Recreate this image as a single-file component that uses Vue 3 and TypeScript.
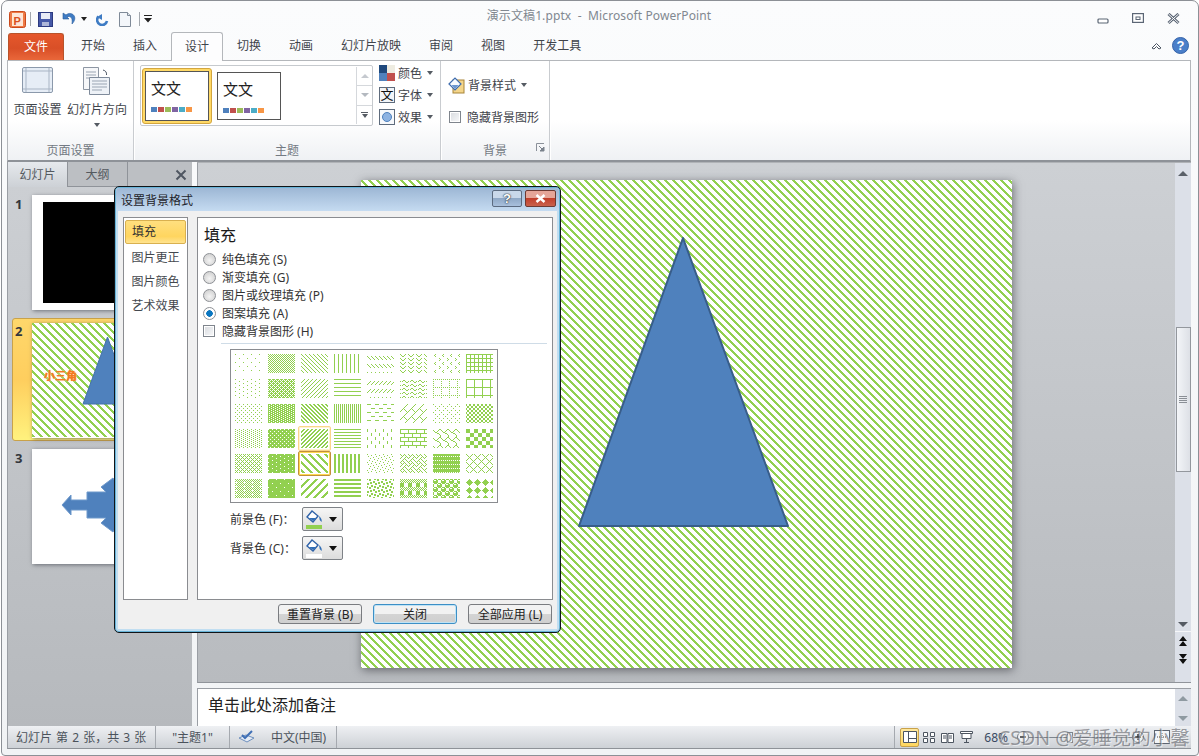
<script setup lang="ts">
const tabs = ['开始', '插入', '设计', '切换', '动画', '幻灯片放映', '审阅', '视图', '开发工具']
const sideItems = ['填充', '图片更正', '图片颜色', '艺术效果']
const fillOptions = [
  { label: '纯色填充 (S)', on: false },
  { label: '渐变填充 (G)', on: false },
  { label: '图片或纹理填充 (P)', on: false },
  { label: '图案填充 (A)', on: true },
]
const themeBars = ['#4f81bd', '#c0504d', '#9bbb59', '#8064a2', '#4bacc6', '#f79646']

// 8px wide hatch bitmaps, one hex byte per row, left to right as in the palette
const hatches = [
  '80 00 00 00 08 00 00 00', 'AA 55', '88 44 22 11', '88', '00 00 88 44 22 11 00 00', '84 48 30 00', '20 40 20 00 02 01 02 00', 'FF 88 88 88',
  '80 00 08 00', 'EE 55 BB 55', '11 22 44 88', 'FF 00 00 00', '00 00 11 22 44 88 00 00', '00 18 A4 03', 'AA 00 80 00 80 00 80 00', 'FF 80 80 80 80 80 80 80',
  '88 00 22 00', 'EE BB', 'CC 66 33 99', 'AA', 'F0 00 00 00 0F 00 00 00', '01 02 04 08 10 28 44 82', '80 00 22 00 08 00 22 00', '99 99 66 66',
  '88 22', '77 FF DD FF', '33 66 CC 99', 'FF 00 00', '80 80 80 00 08 08 08 00', 'FF 80 80 80 FF 08 08 08', '03 84 48 30 0C 02 01 01', 'F0 F0 F0 F0 0F 0F 0F 0F',
  'AA 44 AA 11', '7F FF F7 FF', 'C1 E0 70 38 1C 0E 07 83', 'CC', '80 08 40 02 10 01 20 04', '88 54 22 45 88 14 22 51', 'FF FF 55 FF', '82 44 28 10 28 44 82 01',
  'AA 55 AA 15', '7F FF FF FF F7 FF FF FF', '83 07 0E 1C 38 70 E0 C1', 'FF FF 00 00', 'B1 30 03 1B D8 C0 0C 8D', 'AA 55 AA 55 F0 F0 F0 F0', '77 98 F8 F8 77 89 8F 8F', '10 38 7C FE 7C 38 10 00',
]

function bitmap(code: string) {
  const rows = code.split(' ').map((h) => parseInt(h, 16))
  const rects: { x: number; y: number }[] = []
  rows.forEach((row, y) => {
    for (let x = 0; x < 8; x++) {
      if (row & (0x80 >> x)) rects.push({ x, y })
    }
  })
  return { rects, h: rows.length }
}

const cells = hatches.map((code, i) => ({ id: `hatch${i}`, ...bitmap(code) }))
const stripes = bitmap('C1 E0 70 38 1C 0E 07 83').rects
</script>

<template>
  <div class="window">
    <header class="titlebar">
      <div class="qat">
        <svg class="q-logo" width="17" height="17" viewBox="0 0 17 17">
          <rect x="0.5" y="0.5" width="16" height="16" rx="2" fill="#ef7a45" stroke="#c9491c" />
          <rect x="3" y="2" width="11" height="13" fill="#fde6d6" />
          <text x="4.5" y="13.5" class="q-p">P</text>
        </svg>
        <i class="q-sep q-sep1"></i>
        <svg class="q-save" width="15" height="15" viewBox="0 0 15 15">
          <rect x="0.5" y="0.5" width="14" height="14" fill="#4659a8" stroke="#2c3a80" />
          <rect x="3" y="1" width="9" height="6" fill="#e8ecf6" />
          <rect x="4" y="10" width="7" height="4" fill="#aeb6d8" />
        </svg>
        <svg class="q-undo" width="14" height="14" viewBox="0 0 14 14">
          <path d="M1 1v6h6L5 5c3-1.500 6 0 5 7 3-3 4-7 1-9.500C9 1 6 1 4 3z" fill="#3f7cc4" stroke="#275a9c" stroke-width="0.6" />
        </svg>
        <i class="tri q-arrow"></i>
        <svg class="q-redo" width="13" height="13" viewBox="0 0 13 13">
          <path d="M2.500 3.500A5 5 0 1 0 11 8" fill="none" stroke="#3f7cc4" stroke-width="2.600" />
          <path d="M7 0v6l-5-3z" transform="translate(-1 1)" fill="#3f7cc4" />
        </svg>
        <svg class="q-new" width="12" height="15" viewBox="0 0 12 15">
          <path d="M.5.500h8l3 3v11H.5z" fill="#f3f6fa" stroke="#7f8a98" />
          <path d="M8.500.500v3h3" fill="#dfe5ec" stroke="#7f8a98" />
        </svg>
        <i class="q-sep q-sep2"></i>
        <svg class="q-more" width="8" height="8" viewBox="0 0 8 8">
          <path d="M0 0h8v1H0zM0 3h8L4 7.500z" fill="#222" />
        </svg>
      </div>
      <div class="doc-title">演示文稿1.pptx&nbsp; - &nbsp;Microsoft PowerPoint</div>
      <div class="win-btns">
        <svg width="13" height="7" viewBox="0 0 13 7" class="w-min"><rect x="1" y="1" width="10" height="4" rx="1" fill="#fff" stroke="#5b6675" stroke-width="1.200" /></svg>
        <svg width="13" height="12" viewBox="0 0 13 12" class="w-max"><rect x=".6" y=".6" width="10.800" height="8.800" fill="#fff" stroke="#5b6675" stroke-width="1.200" /><rect x="4" y="4" width="4" height="2.500" fill="none" stroke="#5b6675" /></svg>
        <svg width="13" height="12" viewBox="0 0 13 12" class="w-close"><path d="M1.500 1l10 9M11.500 1l-10 9" stroke="#5b6675" stroke-width="3" /><path d="M1.500 1l10 9M11.500 1l-10 9" stroke="#fff" stroke-width="1" /></svg>
      </div>
    </header>

    <nav class="tabbar">
      <span class="file-tab">文件</span>
      <span v-for="t in tabs" :key="t" class="tab" :class="{ active: t === '设计' }">{{ t }}</span>
      <span class="tab-tools">
        <svg width="11" height="8" viewBox="0 0 11 8"><path d="M1 6l4.500-4.500L10 6 8 7 5.500 4.500 3 7z" fill="#fff" stroke="#4b5563" /></svg>
        <svg width="17" height="17" viewBox="0 0 17 17" class="help">
          <circle cx="8.500" cy="8.500" r="8" fill="#4a7fc9" stroke="#3563a8" />
          <text x="8.500" y="13" text-anchor="middle" class="help-q">?</text>
        </svg>
      </span>
    </nav>

    <section class="ribbon">
      <div class="group page-group">
        <div class="group-body">
          <div class="big-btn first">
            <svg class="icon-page" width="31" height="26" viewBox="0 0 31 26">
              <rect x=".5" y=".5" width="30" height="25" rx="1.500" fill="#e6edf6" stroke="#8b99ab" />
              <path d="M4 1v24M27 1v24M1 4h29M1 22h29" stroke="#a9b5c5" fill="none" />
            </svg>
            <span>页面设置</span>
          </div>
          <div class="big-btn">
            <svg class="icon-orient" width="28" height="29" viewBox="0 0 28 29">
              <path d="M.5.500h15v22H.5z" fill="#f6f7f9" stroke="#8d96a3" />
              <path d="M3 5h10M3 8h10M3 11h10" stroke="#9aa5b3" />
              <path d="M6.500 10.500h20v17h-20z" fill="#eef2f7" stroke="#7f8b9b" />
              <path d="M9 14h15M9 17h15M9 20h15M9 23h10" stroke="#9aa5b3" />
              <path d="M20 3q4 1 3.500 5" fill="none" stroke="#4b5563" />
            </svg>
            <span>幻灯片方向</span>
            <i class="tri big-arrow"></i>
          </div>
        </div>
        <div class="group-label">页面设置</div>
      </div>

      <div class="group theme-group">
        <div class="group-body theme-body">
          <div class="gallery">
            <div class="theme-list">
              <div class="theme-pick">
                <div class="theme-card">
                  <span class="theme-word">文文</span>
                  <span class="theme-bars"><i v-for="c in themeBars" :key="c" :style="{ background: c }"></i></span>
                </div>
              </div>
              <div class="theme-card plain">
                <span class="theme-word">文文</span>
                <span class="theme-bars"><i v-for="c in themeBars" :key="c" :style="{ background: c }"></i></span>
              </div>
            </div>
            <div class="gallery-scroll">
              <span><i class="tri-up pale"></i></span>
              <span><i class="tri pale"></i></span>
              <span class="g-more"><i class="g-more-line"></i><i class="tri"></i></span>
            </div>
          </div>
          <div class="theme-opts">
            <div class="opt">
              <svg width="16" height="16" viewBox="0 0 16 16">
                <rect width="8" height="8" fill="#1f497d" /><rect x="8" width="8" height="8" fill="#eeece1" />
                <rect y="8" width="8" height="8" fill="#4f81bd" /><rect x="8" y="8" width="8" height="8" fill="#c0504d" />
              </svg>
              <span>颜色</span><i class="tri"></i>
            </div>
            <div class="opt">
              <span class="font-ico">文</span>
              <span>字体</span><i class="tri"></i>
            </div>
            <div class="opt">
              <svg width="16" height="16" viewBox="0 0 16 16">
                <rect x=".5" y=".5" width="15" height="15" fill="#f7f9fc" stroke="#5e6b7c" />
                <circle cx="8" cy="8" r="4.500" fill="#8db3e2" stroke="#4f81bd" />
              </svg>
              <span>效果</span><i class="tri"></i>
            </div>
          </div>
        </div>
        <div class="group-label">主题</div>
      </div>

      <div class="group bg-group">
        <div class="group-body bg-body">
          <div class="opt bg-style">
            <svg width="17" height="17" viewBox="0 0 17 17">
              <rect x="5" y="3" width="11" height="13" fill="#f4d58a" stroke="#a78438" />
              <path d="M1 7l6-6 6 6-6 6z" fill="#f8fbff" stroke="#3e6cae" stroke-width="1.200" />
              <path d="M3.500 8h7L7 12z" fill="#6b97d1" />
            </svg>
            <span>背景样式</span><i class="tri"></i>
          </div>
          <div class="opt bg-check">
            <i class="check"></i>
            <span>隐藏背景图形</span>
          </div>
        </div>
        <div class="group-label">背景
          <svg class="launcher" width="9" height="9" viewBox="0 0 9 9">
            <path d="M.5 8V.500H8" fill="none" stroke="#8a9099" />
            <path d="M3 3l4 4M8 4v4H4z" stroke="#7a828c" fill="#7a828c" />
          </svg>
        </div>
      </div>
    </section>

    <main class="workspace">
      <aside class="slides-panel">
        <div class="panel-tabs">
          <span class="p-tab on">幻灯片</span>
          <span class="p-tab">大纲</span>
          <svg class="p-close" width="12" height="12" viewBox="0 0 12 12"><path d="M1.500 1.500l9 9M10.500 1.500l-9 9" stroke="#4f5661" stroke-width="2" /></svg>
        </div>
        <div class="slide-list">
          <div class="slide-row">
            <b class="num">1</b>
            <div class="thumb thumb-black"><div class="black-box"></div></div>
          </div>
          <div class="slide-row current">
            <b class="num">2</b>
            <div class="thumb">
              <svg width="153" height="114" viewBox="0 0 153 114">
                <rect width="153" height="114" fill="url(#wideStripes)" />
                <polygon points="75.500,14 51,81 100,81" fill="#4f81bd" stroke="#4372aa" />
              </svg>
              <span class="mini-title">小三角</span>
            </div>
          </div>
          <div class="slide-row">
            <b class="num">3</b>
            <div class="thumb">
              <svg width="153" height="115" viewBox="0 0 153 115">
                <polygon points="30,56 39,46 39,51 55,51 55,43 74,43 69,38 81,29 98,56 81,83 69,74 74,69 55,69 55,61 39,61 39,66" fill="#4f81bd" stroke="#6f99cb" />
              </svg>
            </div>
          </div>
        </div>
      </aside>

      <div class="main-pane">
        <div class="editor">
          <div class="stage">
            <div class="slide">
              <svg width="651" height="488" viewBox="0 0 651 488">
                <defs>
                  <pattern id="wideStripes" patternUnits="userSpaceOnUse" width="8" height="8">
                    <rect width="8" height="8" fill="#fff" />
                    <rect v-for="(r, i) in stripes" :key="i" :x="r.x" :y="r.y" width="1" height="1" fill="#92d050" />
                  </pattern>
                </defs>
                <rect width="651" height="488" fill="url(#wideStripes)" />
                <polygon points="322,58 218,346 427,346" fill="#4f81bd" stroke="#385d8a" stroke-width="2" stroke-linejoin="round" />
              </svg>
            </div>
          </div>
          <div class="vscroll">
            <i class="tri-up sb-up"></i>
            <div class="sb-thumb"><i></i><i></i><i></i><i></i></div>
            <i class="tri sb-down"></i>
            <div class="sb-nav">
              <svg width="10" height="12" viewBox="0 0 10 12"><path d="M5 0l4 5H1zM5 5l4 5H1z" fill="#111" /></svg>
              <svg width="10" height="12" viewBox="0 0 10 12"><path d="M1 1h8L5 6zM1 6h8l-4 5z" fill="#111" /></svg>
            </div>
          </div>
        </div>
        <div class="notes">
          <span class="notes-text">单击此处添加备注</span>
          <div class="notes-scroll"><i class="tri-up"></i><i class="tri"></i></div>
        </div>
      </div>
    </main>

    <footer class="statusbar">
      <span class="st st-count">幻灯片 第 2 张，共 3 张</span>
      <span class="st st-theme">"主题1"</span>
      <span class="st st-lang">
        <svg width="17" height="14" viewBox="0 0 17 14">
          <path d="M1 8l7-3 8 3-7 4z" fill="#e6ecf5" stroke="#6d8fbd" />
          <path d="M4 5l3 3 7-7" fill="none" stroke="#3f6fb5" stroke-width="2" />
        </svg>
        中文(中国)
      </span>
      <div class="views">
        <span class="view on"><svg width="14" height="12" viewBox="0 0 14 12"><path d="M.5.500h13v11H.5zM5.500.500v11M5.500 7.500h8" fill="#fff" stroke="#4d5560" /></svg></span>
        <span class="view"><svg width="12" height="11" viewBox="0 0 12 11"><path d="M.5.500h4v4h-4zM7.500.500h4v4h-4zM.5 6.500h4v4h-4zM7.500 6.500h4v4h-4z" fill="#fff" stroke="#4d5560" /></svg></span>
        <span class="view"><svg width="13" height="11" viewBox="0 0 13 11"><path d="M.5 1.500h5.500v9H.5zM7 1.500h5.500v9H7zM2 4h3M2 6h3M8 4h3M8 6h3" fill="#fff" stroke="#4d5560" /></svg></span>
        <span class="view"><svg width="13" height="12" viewBox="0 0 13 12"><path d="M.5.500h12v2H.5zM2 2.500h9v5H2zM6.500 7.500V11M4 11.500h5" fill="#fff" stroke="#4d5560" /></svg></span>
      </div>
      <span class="zoom-val">68%</span>
      <div class="zoom-slider">
        <svg width="12" height="12" viewBox="0 0 12 12"><circle cx="6" cy="6" r="5.500" fill="#eef0f3" stroke="#767d87" /><path d="M3 6h6" stroke="#333" stroke-width="1.500" /></svg>
        <span class="zoom-track"><i class="zoom-knob"></i></span>
        <svg width="12" height="12" viewBox="0 0 12 12"><circle cx="6" cy="6" r="5.500" fill="#eef0f3" stroke="#767d87" /><path d="M3 6h6M6 3v6" stroke="#333" stroke-width="1.500" /></svg>
      </div>
      <svg class="fit" width="16" height="14" viewBox="0 0 16 14"><rect x=".5" y=".5" width="15" height="13" fill="#f3f5f8" stroke="#5e6672" /><path d="M3 7h10M8 3v8" stroke="#444" stroke-dasharray="1 1" /></svg>
    </footer>

    <div class="dialog">
      <div class="dlg-title">
        <span>设置背景格式</span>
        <div class="dlg-btns">
          <span class="cap-btn">?</span>
          <span class="cap-btn cap-close">
            <svg width="11" height="9" viewBox="0 0 11 9"><path d="M1.500 1l8 7M9.500 1l-8 7" stroke="#fff" stroke-width="2.500" /></svg>
          </span>
        </div>
      </div>
      <div class="dlg-body">
        <div class="dlg-main">
          <ul class="dlg-side">
            <li v-for="(s, i) in sideItems" :key="s" :class="{ picked: i === 0 }">{{ s }}</li>
          </ul>
          <div class="dlg-pane">
            <h2>填充</h2>
            <label v-for="o in fillOptions" :key="o.label" class="fill-opt">
              <i class="radio" :class="{ on: o.on }"></i>{{ o.label }}
            </label>
            <label class="fill-opt"><i class="check"></i>隐藏背景图形 (H)</label>
            <hr class="pane-rule" />
            <div class="palette">
              <div v-for="(c, i) in cells" :key="c.id" class="cell" :class="{ hover: i === 26, chosen: i === 34 }">
                <svg width="27" height="19" viewBox="0 0 27 19">
                  <defs>
                    <pattern :id="c.id" patternUnits="userSpaceOnUse" width="8" :height="c.h">
                      <rect v-for="(r, k) in c.rects" :key="k" :x="r.x" :y="r.y" width="1" height="1" fill="#92d050" />
                    </pattern>
                  </defs>
                  <rect width="27" height="19" :fill="`url(#${c.id})`" />
                </svg>
              </div>
            </div>
            <div class="color-row">
              <span>前景色 (F)：</span>
              <div class="color-btn">
                <svg width="17" height="19" viewBox="0 0 17 19">
                  <path d="M1 7l5-6 6 5-5 6z" fill="#fff" stroke="#2f62a8" stroke-width="1.400" />
                  <path d="M3 8h7l-3 3zM13 6q3.500 3 2.500 6-2.500-2-2.500-6z" fill="#2f6db5" />
                  <rect y="15" width="16" height="4" fill="#92d050" />
                </svg>
                <i class="tri dark"></i>
              </div>
            </div>
            <div class="color-row">
              <span>背景色 (C)：</span>
              <div class="color-btn">
                <svg width="17" height="19" viewBox="0 0 17 19">
                  <path d="M1 7l5-6 6 5-5 6z" fill="#fff" stroke="#2f62a8" stroke-width="1.400" />
                  <path d="M3 8h7l-3 3zM13 6q3.500 3 2.500 6-2.500-2-2.500-6z" fill="#2f6db5" />
                  <rect y="15" width="16" height="4" fill="#fff" />
                </svg>
                <i class="tri dark"></i>
              </div>
            </div>
          </div>
        </div>
        <div class="dlg-foot">
          <button>重置背景 (B)</button>
          <button class="focus">关闭</button>
          <button>全部应用 (L)</button>
        </div>
      </div>
    </div>

    <div class="watermark">CSDN @爱睡觉的小馨</div>
  </div>
</template>

<style scoped>
.window {
  position: relative;
  box-sizing: border-box;
  width: 1198px;
  height: 756px;
  margin-left: 1px;
  padding: 0 7px 6px 5px;
  display: flex;
  flex-direction: column;
  overflow: hidden;
  border: 1px solid #8c9096;
  border-radius: 7px 7px 4px 4px;
  background: linear-gradient(#fbfcfd, #f1f3f5);
  font-family: "Noto Sans", "Noto Sans CJK SC", sans-serif;
  font-size: 12px;
  color: #3f444b;
}
i { display: block; font-style: normal; }

/* arrows */
.tri { width: 0; height: 0; border: 3px solid transparent; border-top: 4px solid #555b63; border-bottom: 0; }
.tri-up { width: 0; height: 0; border: 5px solid transparent; border-bottom: 5px solid #5a6068; border-top: 0; }
.tri.dark { border-width: 4px; border-top-width: 5px; border-bottom-width: 0; border-top-color: #111; }
.tri.pale { border-top-color: #b4b9c0; border-width: 4px; border-bottom-width: 0; }
.tri-up.pale { border-bottom-color: #c5c9cf; border-width: 4px; border-top-width: 0; }

/* title bar */
.titlebar { height: 30px; flex: none; display: grid; grid-template-columns: 1fr auto 1fr; align-items: center; }
.qat { display: flex; align-items: center; padding-left: 2px; }
.q-logo { margin-top: 6px; }
.q-p { font: bold 11px "Liberation Sans", sans-serif; fill: #d9501e; }
.q-sep { width: 1px; height: 14px; background: #a3a8ae; margin-top: 6px; }
.q-sep1 { margin-left: 4px; }
.q-save { margin: 6px 0 0 7px; }
.q-undo { margin: 6px 0 0 9px; }
.q-arrow { margin: 6px 0 0 5px; border-top-color: #222; }
.q-redo { margin: 6px 0 0 9px; }
.q-new { margin: 6px 0 0 10px; }
.q-sep2 { margin-left: 8px; }
.q-more { margin: 6px 0 0 4px; }
.doc-title { color: #818890; font-size: 12px; letter-spacing: 0.100px; margin-top: -3px; }
.win-btns { display: flex; justify-content: flex-end; align-items: center; padding-top: 5px; }
.w-min { margin: 5px 0 0; }
.w-max { margin-left: 22px; }
.w-close { margin: 0 11px 0 22px; }

/* tabs */
.tabbar { height: 29px; flex: none; display: flex; position: relative; z-index: 1; }
.file-tab {
  box-sizing: border-box;
  width: 56px;
  margin: 2px 3px 0 1px;
  border: 1px solid #b8532b;
  border-bottom: 0;
  border-radius: 3px 3px 0 0;
  background: linear-gradient(#e5572c, #d94f27 55%, #e9673a);
  color: #fff;
  text-align: center;
  line-height: 26px;
}
.tab { padding: 0 14px; line-height: 29px; }
.tab.active {
  margin-top: 1px;
  height: 29px;
  box-sizing: border-box;
  padding: 0 13px;
  line-height: 27px;
  background: #fdfdfe;
  border: 1px solid #b4b7bb;
  border-bottom: 0;
  border-radius: 3px 3px 0 0;
}
.tab-tools { margin-left: auto; display: flex; align-items: center; gap: 10px; padding-right: 2px; }
.help-q { font: bold 13px "Liberation Sans", sans-serif; fill: #fff; }

/* ribbon */
.ribbon {
  height: 102px;
  flex: none;
  box-sizing: border-box;
  display: flex;
  border: 1px solid #b4b7bb;
  border-bottom: 2px solid #8e9298;
  background: linear-gradient(#fff 60%, #eff1f4);
}
.group { display: flex; flex-direction: column; border-right: 1px solid #c9ccd0; box-shadow: 1px 0 0 #fff; }
.group-body { flex: 1; display: flex; }
.group-label { height: 21px; position: relative; text-align: center; color: #737a83; line-height: 23px; }
.page-group { width: 125px; }
.theme-group { width: 306px; }
.bg-group { width: 108px; }
.big-btn { width: 60px; display: flex; flex-direction: column; align-items: center; position: relative; white-space: nowrap; }
.big-btn.first { width: 59px; }
.big-btn span { position: absolute; top: 40px; line-height: 18px; }
.big-arrow { position: absolute; top: 62px; }
.icon-page { margin-top: 6px; }
.icon-orient { margin-top: 6px; }
.theme-body { padding: 4px 0 0 6px; }
.gallery {
  box-sizing: border-box;
  width: 233px;
  height: 61px;
  display: flex;
  padding: 1px 0 1px 1px;
  border: 1px solid #c6cace;
  border-radius: 2px;
  background: #fff;
}
.theme-list { flex: 1; display: flex; gap: 5px; align-items: center; }
.theme-pick { box-sizing: border-box; width: 70px; height: 56px; padding: 2px 2px; display: flex; border: 1px solid #d3a63f; border-radius: 3px; background: #ffd966; }
.theme-card { box-sizing: border-box; flex: 1; display: flex; flex-direction: column; border: 1px solid #555; background: #fff; padding: 6px 0 0 5px; }
.theme-card.plain { flex: none; width: 64px; height: 48px; }
.theme-word { font-size: 15px; line-height: 21px; color: #222; }
.theme-bars { display: flex; gap: 1px; margin-top: 8px; }
.theme-bars i { width: 6px; height: 5px; }
.gallery-scroll { width: 15px; display: flex; flex-direction: column; border-left: 1px solid #d5d8dc; }
.gallery-scroll span { flex: 1; display: flex; flex-direction: column; align-items: center; justify-content: center; border-bottom: 1px solid #d5d8dc; }
.gallery-scroll .g-more { border-bottom: 0; gap: 1px; }
.g-more-line { width: 7px; height: 1px; background: #555b63; }
.theme-opts { margin-left: 6px; display: flex; flex-direction: column; gap: 6px; }
.opt { display: flex; align-items: center; height: 16px; gap: 3px; white-space: nowrap; }
.opt .tri { margin-left: 2px; }
.font-ico { box-sizing: border-box; width: 16px; height: 16px; border: 1px solid #5e6b7c; background: #f2f5f9; color: #111; font-size: 13px; line-height: 13px; text-align: center; }
.bg-body { flex-direction: column; padding: 16px 0 0 8px; }
.bg-style svg { margin-left: -1px; }
.bg-check { margin-top: 16px; gap: 6px; }
.launcher { position: absolute; right: 4px; top: 4px; }
.check {
  box-sizing: border-box;
  width: 12px;
  height: 12px;
  flex: none;
  border: 1px solid #7f858d;
  background: linear-gradient(135deg, #d8dbdf, #f8f9fa);
  box-shadow: inset 0 0 0 1px #fff;
}

/* workspace */
.workspace { flex: 1; min-height: 0; display: flex; }
.slides-panel {
  width: 185px;
  flex: none;
  display: flex;
  flex-direction: column;
  overflow: hidden;
  background: linear-gradient(#cdd0d4, #b6b9bd);
  border-left: 1px solid #9a9ea4;
  box-sizing: border-box;
}
.panel-tabs { height: 25px; flex: none; display: flex; align-items: stretch; position: relative; background: #bcbfc3; }
.p-tab { box-sizing: border-box; width: 60px; text-align: center; line-height: 25px; border-right: 1px solid #8f9399; border-bottom: 1px solid #8f9399; color: #54595f; }
.p-tab.on { background: linear-gradient(#e6e9ed, #cdd1d6); border-bottom: 0; }
.p-close { position: absolute; right: 5px; top: 7px; }
.slide-list { padding: 4px 0 0 4px; display: flex; flex-direction: column; gap: 4px; }
.slide-row { position: relative; height: 123px; box-sizing: border-box; padding: 4px 0 0 20px; border-radius: 3px 0 0 3px; display: flex; }
.slide-row.current { background: linear-gradient(#fed76b, #fece5e 50%, #fff27e); border: 1px solid #c9a24a; padding: 4px 0 0 19px; }
.num { position: absolute; left: 3px; top: 4px; font-size: 13px; color: #33373d; }
.current .num { left: 2px; top: 3px; }
.thumb { position: relative; width: 153px; height: 115px; flex: none; background: #fff; box-shadow: 1px 1px 4px rgba(50, 55, 65, 0.6); }
.thumb svg { display: block; }
.thumb-black { box-sizing: border-box; padding: 7px 11px; }
.black-box { width: 100%; height: 100%; background: #000; }
.mini-title { position: absolute; left: 12px; top: 44px; color: #f47a20; font-size: 11px; font-weight: 700; text-shadow: 0 0 1px #f47a20, 0 0 2px #fff; }

.main-pane { flex: 1; min-width: 0; margin-left: 5px; display: flex; flex-direction: column; }
.editor { flex: 1; min-height: 0; display: flex; background: linear-gradient(#cdd0d4, #b8bbbf); border-left: 1px solid #9a9ea4; border-bottom: 1px solid #90949a; border-top: 1px solid #b0b3b7; }
.stage { flex: 1; min-width: 0; padding: 17px 0 0 163px; }
.slide { width: 651px; height: 488px; box-shadow: 1px 2px 9px rgba(40, 42, 48, 0.6); }
.slide svg { display: block; }
.vscroll { width: 16px; flex: none; display: flex; flex-direction: column; align-items: center; background: #dce0e8; }
.sb-up { margin-top: 8px; }
.sb-thumb {
  box-sizing: border-box;
  width: 15px;
  height: 145px;
  margin-top: 151px;
  display: flex;
  flex-direction: column;
  gap: 1px;
  align-items: center;
  justify-content: center;
  border: 1px solid #93979d;
  background: linear-gradient(90deg, #f3f5f8, #dde0e6);
}
.sb-thumb i { width: 8px; height: 1px; background: #8a8f96; }
.sb-down { margin-top: 150px; border-width: 5px; border-top-width: 5px; border-bottom-width: 0; }
.sb-nav { margin-top: 4px; padding-top: 4px; border-top: 1px solid #f5f6f8; align-self: stretch; flex: 1; display: flex; flex-direction: column; align-items: center; gap: 5px; }
.sb-nav svg { display: block; }
.notes {
  height: 38px;
  flex: none;
  margin-top: 5px;
  display: flex;
  background: #fff;
  border: 1px solid #9a9ea4;
  border-width: 1px 0 0 1px;
  box-sizing: border-box;
}
.notes-text { flex: 1; padding-left: 10px; font-size: 16px; line-height: 32px; color: #222; }
.notes-scroll { width: 16px; display: flex; flex-direction: column; align-items: center; justify-content: space-between; padding: 7px 0 5px; box-sizing: border-box; background: #dce0e8; }
.notes-scroll .tri-up { border-bottom-color: #8f9aa1; }
.notes-scroll .tri { border-width: 5px; border-bottom-width: 0; border-top-color: #8f9aa1; }

/* status bar */
.statusbar {
  height: 22px;
  flex: none;
  display: flex;
  align-items: center;
  background: linear-gradient(#eef0f3, #cdd1d6);
  border-bottom: 1px solid #8e9298;
  border-left: 1px solid #9a9ea4;
  color: #4b525b;
  position: relative;
}
.st { height: 100%; display: flex; align-items: center; box-sizing: border-box; border-right: 1px solid #a5a9af; white-space: nowrap; }
.st-count { width: 148px; padding-left: 8px; word-spacing: 1px; }
.st-theme { width: 74px; justify-content: center; }
.st-lang { width: 107px; padding-left: 8px; gap: 16px; }
.views { margin-left: auto; display: flex; align-items: center; height: 100%; padding-left: 5px; border-left: 1px solid #a5a9af; }
.view { width: 19px; height: 19px; display: flex; align-items: center; justify-content: center; }
.view.on { background: linear-gradient(#ffe9a0, #ffd65e); border: 1px solid #c9a24a; border-radius: 2px; box-sizing: border-box; }
.zoom-val { margin-left: 8px; color: #3a4a63; }
.zoom-slider { margin-left: 9px; display: flex; align-items: center; }
.zoom-track { width: 103px; height: 1px; background: #7e858e; position: relative; }
.zoom-knob { position: absolute; left: 38px; top: -5px; width: 6px; height: 11px; background: #e9ebee; border: 1px solid #7e858e; box-sizing: border-box; }
.fit { margin: 0 21px 0 10px; }

/* dialog */
.dialog {
  position: absolute;
  left: 112px;
  top: 185px;
  box-sizing: border-box;
  width: 447px;
  height: 447px;
  display: flex;
  flex-direction: column;
  padding: 0 3px 3px;
  border: 1px solid #101418;
  border-radius: 5px;
  background: #c1def1;
  box-shadow: 0 0 0 1px #68b4d8 inset;
}
.dlg-title {
  height: 23px;
  flex: none;
  margin: 1px -2px 0;
  padding: 0 3px 0 5px;
  display: flex;
  align-items: center;
  justify-content: space-between;
  background: linear-gradient(#9db7d5, #c5dbf1);
  border-radius: 4px 4px 0 0;
  color: #1f242b;
}
.dlg-btns { display: flex; gap: 3px; margin-top: -3px; }
.cap-btn {
  box-sizing: border-box;
  width: 30px;
  height: 17px;
  border: 1px solid #5c6b80;
  border-radius: 2px;
  background: linear-gradient(#c9d8ea 45%, #8fa8c6 50%, #a9c0dc);
  color: #fff;
  font: 700 13px/15px "Liberation Sans", sans-serif;
  text-align: center;
  text-shadow: 0 0 2px #1c2530, 0 0 1px #1c2530;
}
.cap-close { display: flex; align-items: center; justify-content: center; width: 31px; background: linear-gradient(#e5a598 45%, #c2402c 50%, #c9614c); border-color: #6d3a33; }
.dlg-body { flex: 1; min-height: 0; display: flex; flex-direction: column; padding: 6px 4px 0 5px; background: #f0f0f0; }
.dlg-main { display: flex; gap: 9px; height: 383px; flex: none; }
.dlg-side {
  box-sizing: border-box;
  width: 65px;
  margin: 0;
  padding: 2px 1px;
  list-style: none;
  background: #fff;
  border: 1px solid #8a8c90;
}
.dlg-side li { height: 24px; line-height: 24px; text-align: center; color: #44484e; }
.dlg-side li.picked { box-sizing: border-box; margin-bottom: 2px; line-height: 22px; text-align: left; padding-left: 6px; background: linear-gradient(#ffdf7f, #ffd55f 70%, #ffe38f); border: 1px solid #d9b04f; border-radius: 2px; color: #333; }
.dlg-pane { box-sizing: border-box; width: 356px; padding: 0; background: #fff; border: 1px solid #8a8c90; }
.dlg-pane h2 { margin: 6px 0 4px 6px; font-size: 16px; line-height: 22px; font-weight: 400; color: #1a1a1a; }
.fill-opt { display: flex; align-items: center; gap: 6px; height: 18px; padding-left: 5px; color: #333; }
.fill-opt .check { margin-right: 1px; }
.radio {
  box-sizing: border-box;
  width: 13px;
  height: 13px;
  flex: none;
  border: 1px solid #8d9095;
  border-radius: 50%;
  background: radial-gradient(circle at 50% 60%, #f4f4f4, #c9c9c9);
}
.radio.on { background: radial-gradient(circle, #0a76c0 0 3px, #fff 3.500px); }
.pane-rule { margin: 3px 5px 0 23px; border: 0; border-top: 1px solid #cfdce7; height: 0; }
.palette {
  box-sizing: border-box;
  width: 268px;
  height: 154px;
  margin: 5px 0 4px 32px;
  padding: 1px;
  display: grid;
  grid-template-columns: repeat(8, 33px);
  grid-auto-rows: 25px;
  border: 1px solid #8a8c90;
}
.cell { box-sizing: border-box; display: flex; align-items: center; justify-content: center; border: 1px solid transparent; border-radius: 2px; }
.cell.hover { border: 1px solid #fad58a; box-shadow: inset 0 0 0 1px #fff3d0; }
.cell.chosen { border: 1px solid #c08e3a; box-shadow: inset 0 0 0 1px #ffd74f; }
.cell svg { display: block; flex: none; }
.color-row { display: flex; align-items: center; height: 24px; margin: 0 0 5px 32px; color: #333; }
.color-row span { width: 72px; white-space: nowrap; }
.color-btn {
  box-sizing: border-box;
  width: 41px;
  height: 24px;
  display: flex;
  align-items: center;
  gap: 6px;
  padding-left: 3px;
  border: 1px solid #7e8287;
  border-radius: 2px;
  background: linear-gradient(#f6f6f6, #dcdcdc);
}
.dlg-foot { display: flex; justify-content: flex-end; gap: 11px; padding: 4px 1px 0 0; }
.dlg-foot button {
  box-sizing: border-box;
  width: 84px;
  height: 20px;
  padding: 0;
  border: 1px solid #7a7c80;
  border-radius: 3px;
  background: linear-gradient(#f2f2f2 48%, #d4d4d4 52%, #cfcfcf);
  font: inherit;
  color: #222;
}
.dlg-foot button.focus { border-color: #3c8fc6; box-shadow: inset 0 0 0 1px #bfe3f5; }

.watermark {
  position: absolute;
  left: 996px;
  top: 724px;
  font-size: 19.500px;
  line-height: 26px;
  color: rgba(95, 98, 104, 0.62);
  text-shadow: 1px 1px 0 rgba(255, 255, 255, 0.5);
  white-space: nowrap;
}
</style>

<style>
html, body { margin: 0; background: #fff; }
</style>
